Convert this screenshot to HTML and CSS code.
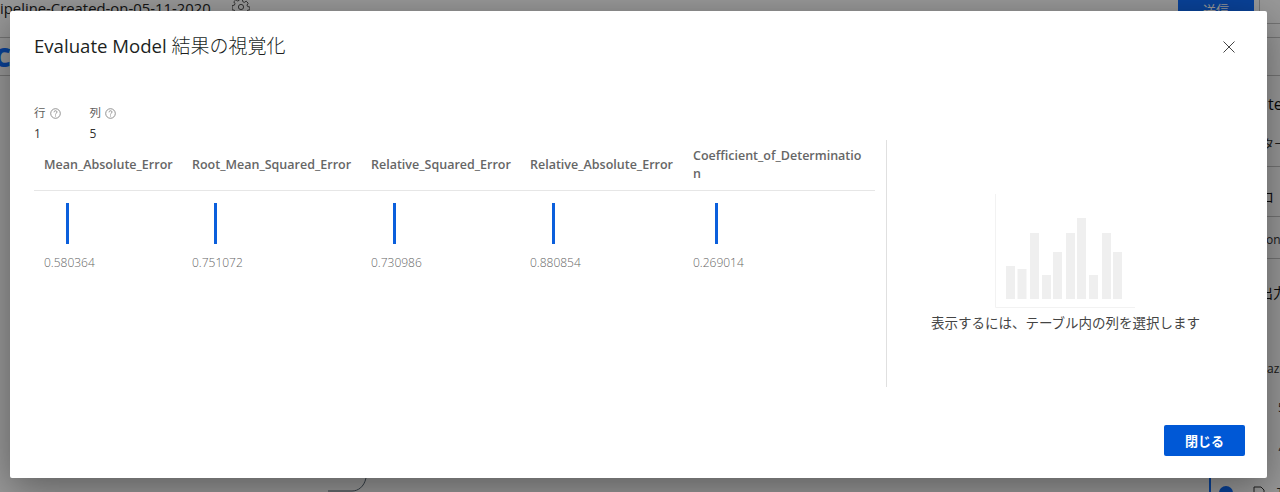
FILE: index.html
```html
<!DOCTYPE html>
<html lang="ja">
<head>
    <meta charset="UTF-8">
    <meta name="viewport" content="width=device-width, initial-scale=1.0">
    <title>Evaluate Model 結果の視覚化</title>
    <link rel="stylesheet" href="styles.css">
</head>
<body>
    <!-- Page behind the dialog -->
    <div class="page">
        <header class="topbar">
            <span class="pipeline-name">ipeline-Created-on-05-11-2020</span>
            <svg class="gear" width="18" height="18" viewBox="0 0 18 18" fill="none" stroke="#555" stroke-width="1">
                <circle cx="9" cy="9" r="2.6"/>
                <path d="M7.6 1.5h2.8l.4 2.2 1.5.7 1.9-1.2 2 2-1.2 1.9.7 1.5 2.2.4v2.8l-2.2.4-.7 1.5 1.2 1.9-2 2-1.9-1.2-1.5.7-.4 2.2H7.6l-.4-2.2-1.5-.7-1.9 1.2-2-2 1.2-1.9-.7-1.5-2.2-.4V7.6l2.2-.4.7-1.5-1.2-1.9 2-2 1.9 1.2 1.5-.7z"/>
            </svg>
            <button class="submit-btn">送信</button>
            <div class="topbar-end"></div>
        </header>
        <div class="toolbar">
            <span class="toolbar-letter">C</span>
        </div>
        <div class="side-panel">
            <div class="side-row side-te">te</div>
            <div class="side-row side-ta">ター</div>
            <div class="side-row side-ro">ロ</div>
            <div class="side-row side-on">on</div>
            <div class="side-row side-out">出力</div>
            <div class="side-row side-azu">azu</div>
            <div class="side-row side-five">5</div>
            <div class="side-row side-six">6</div>
        </div>
        <div class="output-item">
            <span class="output-dot"></span>
            <svg class="output-file" width="12" height="14" viewBox="0 0 12 14" fill="none" stroke="#333">
                <path d="M1 1h7l3 3v10H1z"/>
            </svg>
            <span class="output-name">T</span>
        </div>
        <svg class="edge" width="40" height="16" viewBox="0 0 40 16" fill="none" stroke="#5b6b78">
            <path d="M38 0c-2 9-8 13-14 13H0"/>
        </svg>
    </div>
    <div class="overlay"></div>

    <!-- Dialog -->
    <div class="dialog">
        <div class="dialog-head">
            <h1>Evaluate Model <span class="title-jp">結果の視覚化</span></h1>
            <svg class="close-icon" width="12" height="12" viewBox="0 0 12 12" stroke="#444" stroke-width="1">
                <path d="M.5.5l11 11M11.5.5l-11 11"/>
            </svg>
        </div>

        <div class="stats">
            <div class="stat">
                <div class="stat-label">行
                    <svg class="help-icon" width="11" height="11" viewBox="0 0 11 11" fill="none" stroke="#777" stroke-width=".8">
                        <circle cx="5.5" cy="5.5" r="4.8"/>
                        <path d="M4 4.3c0-2 3-2 3-.2 0 1.1-1.5 1.1-1.5 2.4"/>
                        <path d="M5.5 7.5v1"/>
                    </svg>
                </div>
                <div class="stat-value">1</div>
            </div>
            <div class="stat">
                <div class="stat-label">列
                    <svg class="help-icon" width="11" height="11" viewBox="0 0 11 11" fill="none" stroke="#777" stroke-width=".8">
                        <circle cx="5.5" cy="5.5" r="4.8"/>
                        <path d="M4 4.3c0-2 3-2 3-.2 0 1.1-1.5 1.1-1.5 2.4"/>
                        <path d="M5.5 7.5v1"/>
                    </svg>
                </div>
                <div class="stat-value">5</div>
            </div>
        </div>

        <div class="content">
            <div class="result-table">
                <div class="cell-head">Mean_Absolute_Error</div>
                <div class="cell-head">Root_Mean_Squared_Error</div>
                <div class="cell-head">Relative_Squared_Error</div>
                <div class="cell-head">Relative_Absolute_Error</div>
                <div class="cell-head cell-head-last">Coefficient_of_Determination</div>

                <div class="cell"><div class="bar"></div><div class="value">0.580364</div></div>
                <div class="cell"><div class="bar"></div><div class="value">0.751072</div></div>
                <div class="cell"><div class="bar"></div><div class="value">0.730986</div></div>
                <div class="cell"><div class="bar"></div><div class="value">0.880854</div></div>
                <div class="cell"><div class="bar"></div><div class="value">0.269014</div></div>
            </div>

            <div class="preview">
                <svg class="placeholder" width="140" height="115" viewBox="0 0 140 115">
                    <path d="M.5 0v113.5H140" fill="none" stroke="#f2f2f2"/>
                    <g fill="#efefef">
                        <rect x="11" y="72" width="9" height="33"/>
                        <rect x="22.5" y="75" width="9" height="30"/>
                        <rect x="35" y="39" width="9" height="66"/>
                        <rect x="47" y="81" width="9" height="24"/>
                        <rect x="58" y="58" width="9" height="47"/>
                        <rect x="71" y="39" width="9" height="66"/>
                        <rect x="82" y="24" width="9" height="81"/>
                        <rect x="94" y="81" width="9" height="24"/>
                        <rect x="107" y="39" width="9" height="66"/>
                        <rect x="118" y="58" width="9" height="47"/>
                    </g>
                </svg>
                <p>表示するには、テーブル内の列を選択します</p>
            </div>
        </div>

        <div class="dialog-foot">
            <button class="close-btn">閉じる</button>
        </div>
    </div>
</body>
</html>
```

FILE: styles.css
```css
* {
    box-sizing: border-box;
}

html, body {
    height: 100%;
}

body {
    margin: 0;
    overflow: hidden;
    font-family: "Open Sans", "Noto Sans CJK JP", sans-serif;
    color: #323130;
    background-color: #fff;
}

/* page behind the dialog */
.page {
    height: 492px;
    overflow: hidden;
}

.topbar {
    display: flex;
    align-items: flex-start;
    height: 38px;
    border-bottom: 1px solid #c4c4c4;
}

.pipeline-name {
    font-size: 14.85px;
    line-height: 16px;
    color: #222;
}

.gear {
    margin-left: 21px;
    margin-top: -2px;
}

.submit-btn {
    margin-left: auto;
    width: 76px;
    height: 16px;
    border: none;
    padding: 0;
    background-color: #106fff;
    color: #fff;
    font: 13px "Noto Sans CJK JP", sans-serif;
}

.topbar-end {
    width: 21px;
    height: 24px;
    margin-left: 5px;
    border-left: 1px solid #c4c4c4;
    border-bottom: 1px solid #c4c4c4;
}

.toolbar {
    height: 38px;
    border-bottom: 1px solid #c4c4c4;
    overflow: hidden;
}

.toolbar-letter {
    display: block;
    margin-left: -6px;
    font-size: 26px;
    font-weight: 800;
    line-height: 38px;
    color: #106fff;
}

.side-panel {
    position: absolute;
    top: 77px;
    left: 1260px;
    width: 20px;
    overflow: hidden;
    white-space: nowrap;
}

.side-row {
    font-size: 12px;
}

.side-te {
    height: 50px;
    padding-left: 8px;
    font-size: 16px;
    line-height: 54px;
    color: #111;
}

.side-ta {
    height: 40px;
    margin-left: 2px;
    line-height: 36px;
    border-bottom: 1px solid #c4c4c4;
}

.side-ro {
    height: 50px;
    font-size: 14px;
    line-height: 60px;
    color: #111;
    border-bottom: 1px solid #c4c4c4;
}

.side-on {
    height: 42px;
    padding-left: 6px;
    line-height: 46px;
    border-bottom: 1px solid #c4c4c4;
}

.side-out {
    height: 68px;
    margin-left: -1px;
    font-size: 14px;
    line-height: 68px;
    color: #111;
}

.side-azu {
    height: 40px;
    padding-left: 7px;
    line-height: 84px;
}

.side-five {
    height: 42px;
    padding-left: 18px;
    line-height: 82px;
}

.side-six {
    height: 42px;
    padding-left: 18px;
    line-height: 86px;
}

.output-item {
    position: absolute;
    top: 478px;
    left: 1209px;
    display: flex;
    gap: 20px;
    width: 71px;
    height: 14px;
    padding-left: 8px;
    overflow: hidden;
    border-left: 2px solid #106fff;
}

.output-dot {
    flex: none;
    width: 14px;
    height: 14px;
    margin-top: 8px;
    border-radius: 50%;
    background-color: #106fff;
}

.output-file {
    flex: none;
    margin-top: 8px;
}

.output-name {
    margin-left: -8px;
    margin-top: 6px;
    font-size: 12px;
}

.edge {
    position: absolute;
    top: 478px;
    left: 328px;
}

.overlay {
    position: absolute;
    inset: 0;
    background-color: rgba(0, 0, 0, 0.4);
}

/* dialog */
.dialog {
    position: absolute;
    top: 11px;
    left: 10px;
    width: 1257px;
    height: 467px;
    display: flex;
    flex-direction: column;
    padding: 22px 22px 22px 24px;
    background-color: #fff;
    border-radius: 2px;
    box-shadow: 0 10px 40px rgba(0, 0, 0, 0.4);
}

.dialog-head {
    display: flex;
    justify-content: space-between;
    align-items: center;
    height: 26px;
}

.dialog-head h1 {
    margin: -2px 0 0;
    font-size: 18.6px;
    font-weight: 500;
    line-height: 26px;
    color: #201f1e;
}

.title-jp {
    font-weight: 300;
    font-size: 19px;
    font-family: "Noto Sans CJK JP", sans-serif;
}

.close-icon {
    margin-right: 10px;
    margin-top: 2px;
}

.stats {
    display: flex;
    gap: 29px;
    margin-top: 47px;
}

.stat-label {
    display: flex;
    align-items: center;
    gap: 4px;
    font-size: 11.5px;
    line-height: 14px;
    color: #605e5c;
}

.stat-value {
    margin-top: 7px;
    font-size: 12px;
    line-height: 13px;
}

.content {
    display: flex;
    height: 247px;
}

.result-table {
    display: grid;
    grid-template-columns: 148px 179px 159px 163px 192px;
    grid-template-rows: 51px 1fr;
    width: 841px;
}

.cell-head {
    display: flex;
    align-items: center;
    padding: 0 0 0 10px;
    border-bottom: 1px solid #e6e6e6;
    font-size: 12.5px;
    font-weight: 600;
    line-height: 18px;
    color: #666;
    white-space: nowrap;
}

.cell-head-last {
    padding-right: 10px;
    white-space: normal;
    word-break: break-all;
}

.cell {
    padding: 12px 10px 0;
}

.bar {
    width: 3px;
    height: 41px;
    margin-left: 22px;
    background-color: #0b5fdc;
}

.value {
    margin-top: 11px;
    font-size: 12px;
    font-weight: 300;
    line-height: 16px;
    color: #666;
}

.preview {
    display: flex;
    flex-direction: column;
    align-items: center;
    width: 358px;
    margin-left: 11px;
    padding-top: 54px;
    border-left: 1px solid #e0e0e0;
}

.placeholder {
    display: block;
    margin-left: -2px;
}

.preview p {
    margin: 4px 0 0;
    font-size: 13.5px;
    line-height: 18px;
    font-family: "Noto Sans CJK JP", sans-serif;
    color: #444;
}

.dialog-foot {
    display: flex;
    justify-content: flex-end;
    margin-top: auto;
}

.close-btn {
    width: 81px;
    height: 31px;
    border: none;
    border-radius: 2px;
    background-color: #0058d6;
    color: #fff;
    font: 700 13px "Noto Sans CJK JP", sans-serif;
}
```
